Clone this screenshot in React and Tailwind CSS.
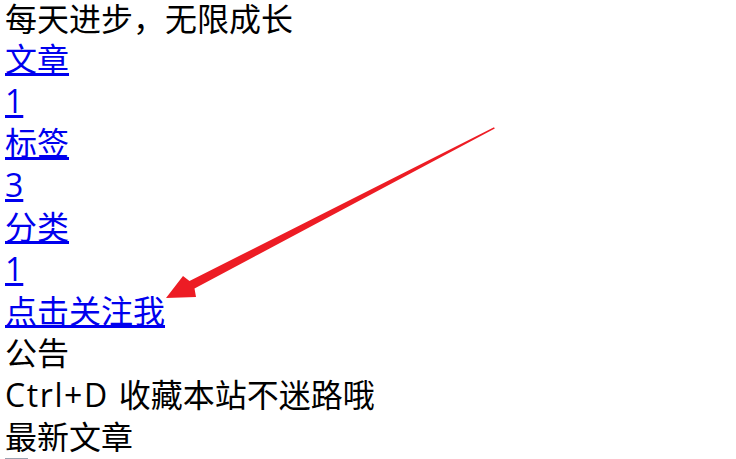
import React from 'react';

const lines = [
  { text: '每天进步，无限成长', first: true },
  { text: '文章', link: true },
  { text: '1', link: true },
  { text: '标签', link: true },
  { text: '3', link: true },
  { text: '分类', link: true },
  { text: '1', link: true },
  { text: '点击关注我', link: true },
  { text: '公告' },
  { text: <><span className="tracking-[1.6px]">Ctrl+D </span>收藏本站不迷路哦</> },
  { text: '最新文章' },
];

// Red hand-drawn arrow pointing at the follow link
function Arrow() {
  return (
    <svg className="absolute left-0 top-0 pointer-events-none" width="736" height="459" viewBox="0 0 736 459">
      <polygon
        points="166,298 183,276 189.5,281 494,127.3 494.8,128.6 194.5,288.5 196,297"
        fill="#ed1c24"
      />
    </svg>
  );
}

export default function App() {
  return (
    <div className="relative w-[736px] h-[459px] overflow-hidden bg-white">
      <div className="px-[5px] text-[32px] leading-[42px] text-black font-['Open_Sans','Noto_Sans_CJK_SC',sans-serif]">
        {lines.map((line, i) => (
          <div key={i} className={line.first ? 'leading-[38px]' : ''}>
            {line.link ? (
              <a href="#" className="text-[#0000ee] underline">{line.text}</a>
            ) : (
              line.text
            )}
          </div>
        ))}
        <div className="h-px w-[23px] bg-gray-400" />
      </div>
      <Arrow />
    </div>
  );
}
